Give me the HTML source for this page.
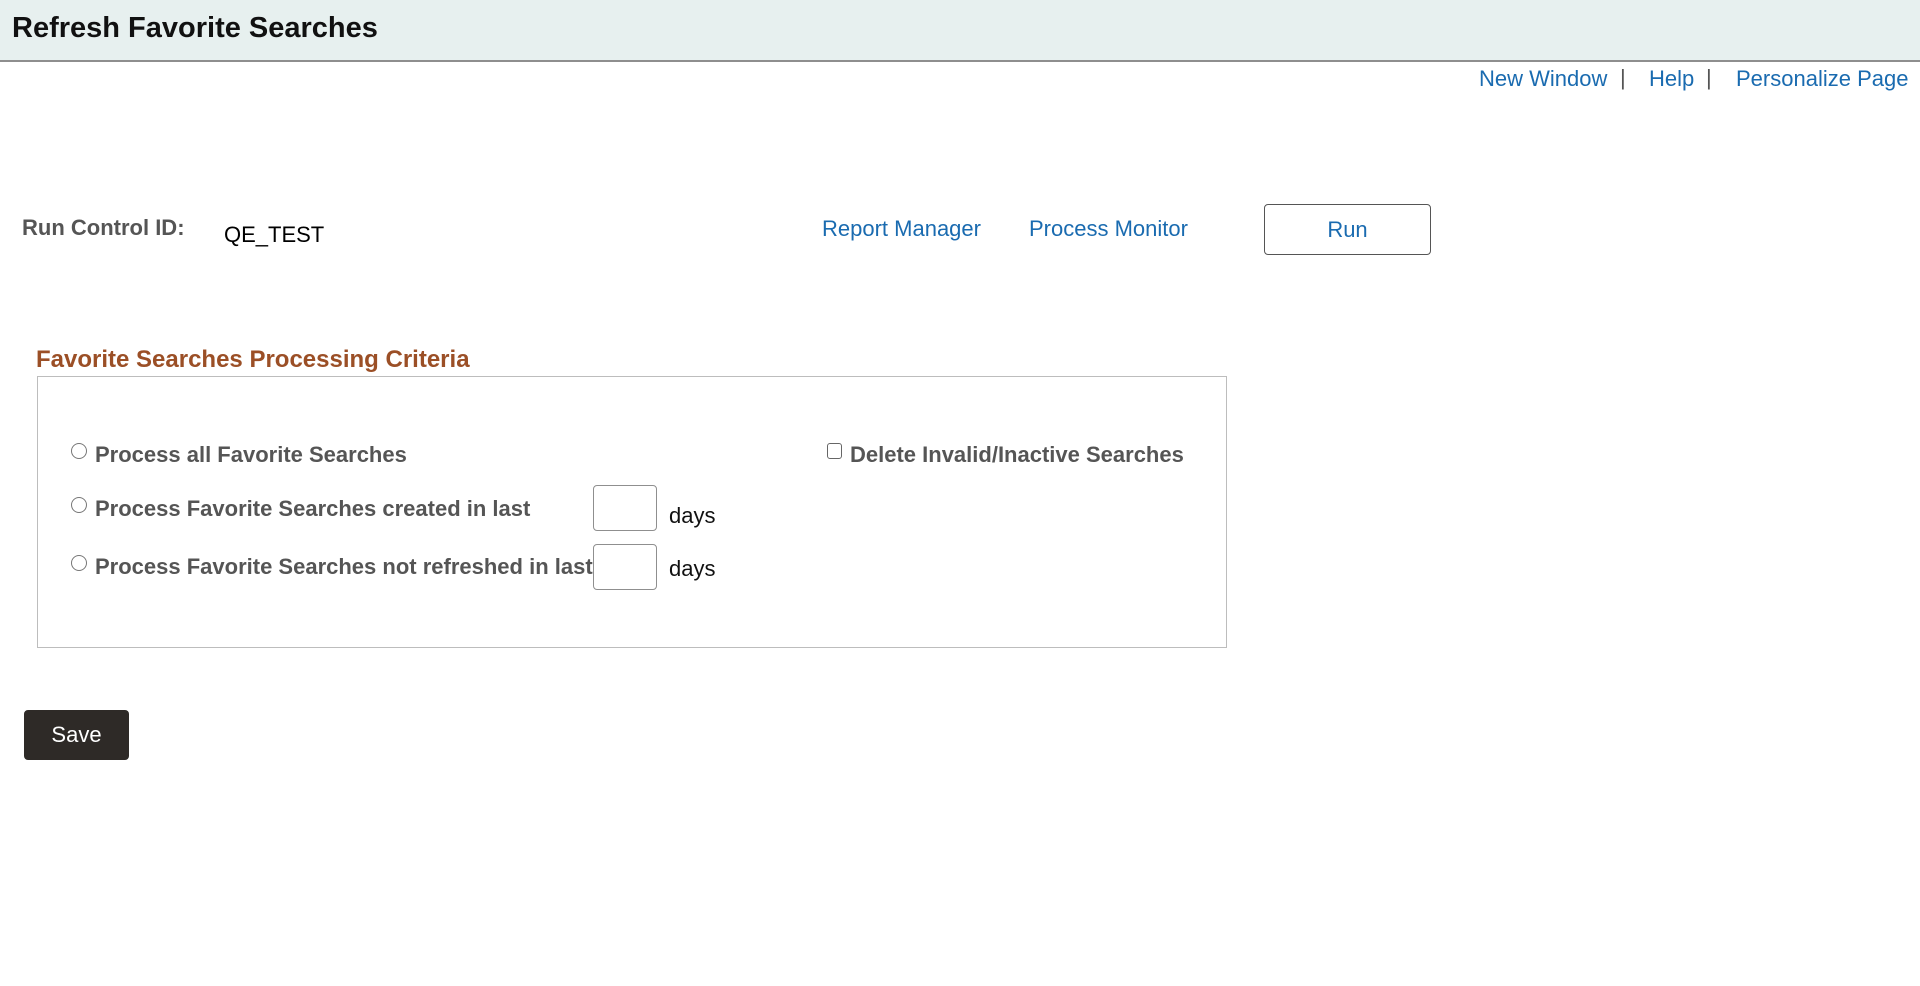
<!DOCTYPE html>
<html><head><meta charset="utf-8"><style>
body{margin:0;width:1920px;height:986px;background:#fff;font-family:"Liberation Sans",Arial,sans-serif;position:relative;overflow:hidden}
.a{position:absolute;white-space:nowrap;line-height:1}
.hdr{position:absolute;left:0;top:0;width:1920px;height:60px;background:#e7f0ef;border-bottom:2px solid #8e8e8e}
.lk{color:#1a6bb0;font-size:22px}
.sep{color:#555;font-size:22px}
.lbl{color:#555;font-weight:bold;font-size:22px}
.radio{position:absolute;width:16px;height:16px;border:1.5px solid #777;border-radius:50%;box-sizing:border-box}
.inp{position:absolute;width:64px;height:46px;border:1px solid #8f8f8f;border-radius:4px;box-sizing:border-box;background:#fff}
</style></head><body>
<div class="hdr"></div>
<div class="a" style="left:12px;top:14px;font-size:29px;font-weight:bold;color:#111">Refresh Favorite Searches</div>
<div class="a lk" style="left:1479px;top:68px">New Window</div>
<div class="a sep" style="left:1620px;top:67px">|</div>
<div class="a lk" style="left:1649px;top:68px">Help</div>
<div class="a sep" style="left:1706px;top:67px">|</div>
<div class="a lk" style="left:1736px;top:68px">Personalize Page</div>

<div class="a lbl" style="left:22px;top:217px">Run Control ID:</div>
<div class="a" style="left:224px;top:224px;font-size:22px;color:#000">QE_TEST</div>
<div class="a lk" style="left:822px;top:218px">Report Manager</div>
<div class="a lk" style="left:1029px;top:218px">Process Monitor</div>
<div class="a" style="left:1264px;top:204px;width:167px;height:51px;border:1px solid #555;border-radius:4px;box-sizing:border-box;text-align:center;line-height:49px;color:#1a6bb0;font-size:22px">Run</div>

<div class="a" style="left:36px;top:348px;font-size:24px;font-weight:bold;color:#9b4f26">Favorite Searches Processing Criteria</div>
<div class="a" style="left:37px;top:376px;width:1190px;height:272px;border:1px solid #bdbdbd;box-sizing:border-box"></div>

<div class="radio" style="left:71px;top:443px"></div>
<div class="a lbl" style="left:95px;top:444px">Process all Favorite Searches</div>
<div class="a" style="left:827px;top:443px;width:15px;height:16px;border:1.5px solid #666;border-radius:3px;box-sizing:border-box"></div>
<div class="a lbl" style="left:850px;top:444px">Delete Invalid/Inactive Searches</div>

<div class="radio" style="left:71px;top:497px"></div>
<div class="a lbl" style="left:95px;top:498px">Process Favorite Searches created in last</div>
<div class="inp" style="left:593px;top:485px"></div>
<div class="a" style="left:669px;top:505px;font-size:22px;color:#111">days</div>

<div class="radio" style="left:71px;top:555px"></div>
<div class="a lbl" style="left:95px;top:556px">Process Favorite Searches not refreshed in last</div>
<div class="inp" style="left:593px;top:544px"></div>
<div class="a" style="left:669px;top:558px;font-size:22px;color:#111">days</div>

<div class="a" style="left:24px;top:710px;width:105px;height:50px;background:#2e2a27;border-radius:4px;color:#fff;font-size:22px;text-align:center;line-height:50px">Save</div>
</body></html>
